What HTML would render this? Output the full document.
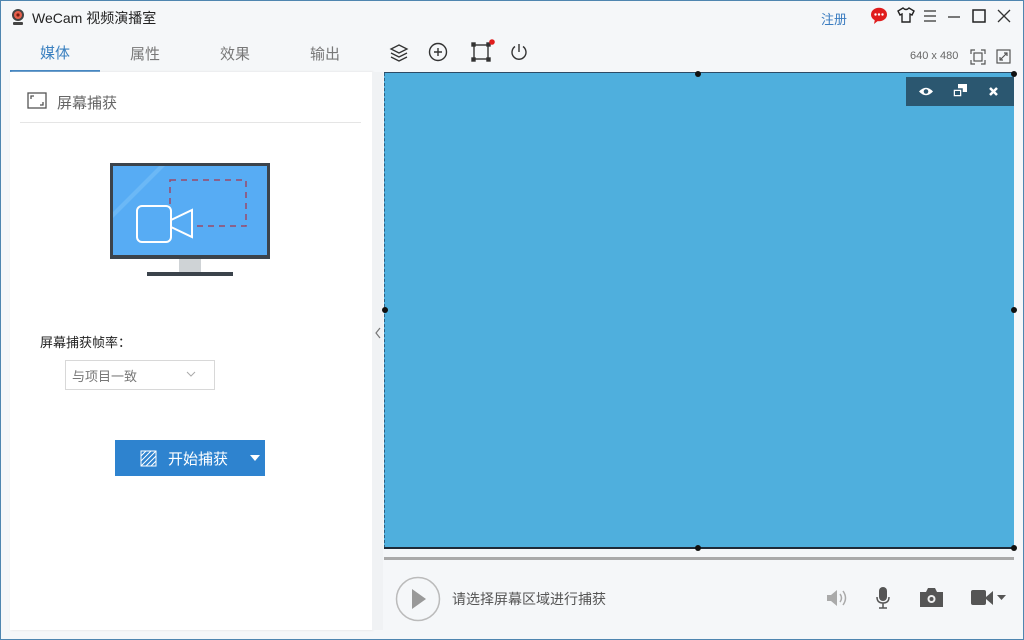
<!DOCTYPE html>
<html><head><meta charset="utf-8"><style>
*{margin:0;padding:0;box-sizing:border-box}
body{width:1024px;height:640px;overflow:hidden;background:#f5f7f9;font-family:"Liberation Sans","Noto Sans CJK SC",sans-serif;position:relative}
.a{position:absolute}
.t{font-size:14px;color:#777}
</style></head><body>
<!-- title -->
<svg class="a" style="left:10px;top:8px" width="16" height="18" viewBox="0 0 16 18"><circle cx="8" cy="7" r="6" fill="#444"/><circle cx="8" cy="7" r="4" fill="#e8604c"/><circle cx="8" cy="7" r="1.6" fill="#7a1d10"/><rect x="3" y="14" width="10" height="3" rx="1" fill="#444"/></svg>
<div class="a" style="left:32px;top:8px;font-size:14px;color:#222">WeCam 视频演播室</div>
<div class="a" style="left:821px;top:9px;font-size:13px;color:#3a7cc0">注册</div>
<svg class="a" style="left:870px;top:7px" width="18" height="18" viewBox="0 0 18 18"><ellipse cx="9" cy="7.5" rx="8" ry="6.8" fill="#e01d1d"/><path d="M5 12l-1 5 5-4z" fill="#e01d1d"/><circle cx="5.5" cy="7.5" r="1.2" fill="#fff"/><circle cx="9" cy="7.5" r="1.2" fill="#fff"/><circle cx="12.5" cy="7.5" r="1.2" fill="#fff"/></svg>
<svg class="a" style="left:897px;top:7px" width="18" height="16" viewBox="0 0 18 16" fill="none" stroke="#222" stroke-width="1.4"><path d="M6 1L1 4l2 4 2-1v8h8V7l2 1 2-4-5-3q-3 3-6 0z"/></svg>
<svg class="a" style="left:923px;top:9px" width="14" height="14" stroke="#333" stroke-width="1.3"><path d="M1 2h12M1 7h12M1 12h12"/></svg>
<svg class="a" style="left:947px;top:9px" width="14" height="14" stroke="#333" stroke-width="1.3"><path d="M1 8h12"/></svg>
<svg class="a" style="left:972px;top:9px" width="14" height="14" fill="none" stroke="#222" stroke-width="1.5"><rect x="1" y="1" width="12" height="12"/></svg>
<svg class="a" style="left:997px;top:9px" width="14" height="14" stroke="#333" stroke-width="1.3"><path d="M1 1l12 12M13 1L1 13"/></svg>
<!-- tabs -->
<div class="a" style="left:40px;top:42px;font-size:15px;color:#3a80c0">媒体</div>
<div class="a" style="left:10px;top:70px;width:90px;height:2px;background:#3a80c0"></div>
<div class="a t" style="left:130px;top:43px;font-size:15px">属性</div>
<div class="a t" style="left:220px;top:43px;font-size:15px">效果</div>
<div class="a t" style="left:310px;top:43px;font-size:15px">输出</div>
<svg class="a" style="left:389px;top:43px" width="20" height="20" fill="none" stroke="#333" stroke-width="1.3"><path d="M10 2l8 4-8 4-8-4z M2 10l8 4 8-4 M2 14l8 4 8-4"/></svg>
<svg class="a" style="left:428px;top:42px" width="20" height="20" fill="none" stroke="#333" stroke-width="1.4"><circle cx="10" cy="10" r="8.5"/><path d="M10 6v8M6 10h8"/></svg>
<svg class="a" style="left:471px;top:39px" width="26" height="24" fill="none" stroke="#333" stroke-width="1.4"><rect x="3" y="6" width="14" height="14"/><rect x="1" y="4" width="3" height="3" fill="#333"/><rect x="16" y="4" width="3" height="3" fill="#333"/><rect x="1" y="19" width="3" height="3" fill="#333"/><rect x="16" y="19" width="3" height="3" fill="#333"/><circle cx="21" cy="3" r="2.8" fill="#e01d1d" stroke="none"/></svg>
<svg class="a" style="left:509px;top:42px" width="20" height="20" fill="none" stroke="#333" stroke-width="1.4"><path d="M10 2v8M6 4.5a7 7 0 1 0 8 0"/></svg>
<div class="a" style="left:910px;top:50px;font-size:11px;color:#666">640 x 480</div>
<svg class="a" style="left:970px;top:49px" width="16" height="16" fill="none" stroke="#555" stroke-width="1.2"><path d="M1 5V1h4M11 1h4v4M15 11v4h-4M5 15H1v-4"/><rect x="4" y="4" width="8" height="8"/></svg>
<svg class="a" style="left:996px;top:49px" width="15" height="15" fill="none" stroke="#555" stroke-width="1.2"><rect x="1" y="1" width="13" height="13"/><path d="M4 11l7-7M8 4h3v3M4 8v3h3"/></svg>
<!-- left panel -->
<div class="a" style="left:10px;top:72px;width:362px;height:558px;background:#fff;box-shadow:1px 0 2px #ddd"></div>
<svg class="a" style="left:27px;top:92px" width="20" height="17" fill="none" stroke="#555" stroke-width="1.3"><rect x="1" y="1" width="18" height="15"/><path d="M4 7V4h3M16 10v3h-3"/></svg>
<div class="a" style="left:57px;top:92px;font-size:15px;color:#666">屏幕捕获</div>
<div class="a" style="left:20px;top:122px;width:341px;height:1px;background:#e5e5e5"></div>
<!-- monitor -->
<svg class="a" style="left:109px;top:162px" width="162" height="120" viewBox="0 0 162 120">
<rect x="1" y="1" width="160" height="96" fill="#3b434b"/>
<rect x="4" y="4" width="154" height="89" fill="#57acf4"/>
<path d="M4 50L50 4h6L4 56z" fill="#6bb8f6"/>
<rect x="61" y="18" width="76" height="46" fill="none" stroke="#9a4a6a" stroke-width="1.5" stroke-dasharray="6 5"/>
<rect x="28" y="44" width="34" height="36" rx="5" fill="#57acf4" stroke="#fff" stroke-width="2"/>
<path d="M62 58l21-10v27l-21-10z" fill="#57acf4" stroke="#fff" stroke-width="2"/>
<rect x="70" y="97" width="22" height="13" fill="#cfd3d6"/>
<rect x="38" y="110" width="86" height="4" fill="#3b434b"/>
</svg>
<div class="a" style="left:40px;top:332px;font-size:13px;color:#222">屏幕捕获帧率：</div>
<div class="a" style="left:65px;top:360px;width:150px;height:30px;border:1px solid #d8d8d8;font-size:13px;color:#777;padding:5px 0 0 6px">与项目一致</div>
<svg class="a" style="left:186px;top:370px" width="10" height="8" fill="none" stroke="#aaa"><path d="M1 2l4 4 4-4"/></svg>
<div class="a" style="left:115px;top:440px;width:150px;height:36px;background:#2e83cf"></div>
<svg class="a" style="left:140px;top:450px" width="17" height="17" fill="none" stroke="#fff" stroke-width="1"><rect x="1" y="1" width="15" height="15"/><path d="M1 6l5-5M1 11l10-10M1 16l15-15M6 16l10-10M11 16l5-5"/></svg>
<div class="a" style="left:168px;top:448px;font-size:15px;color:#fff">开始捕获</div>
<svg class="a" style="left:250px;top:455px" width="10" height="6"><path d="M0 0h10L5 6z" fill="#fff"/></svg>
<!-- splitter -->
<div class="a" style="left:372px;top:72px;width:11px;height:558px;background:#f0f2f4"></div>
<svg class="a" style="left:374px;top:327px" width="8" height="12" fill="none" stroke="#777" stroke-width="1.2"><path d="M6 1L2 6l4 5"/></svg>
<!-- preview -->
<div class="a" style="left:384px;top:73px;width:630px;height:475px;background:#4fafdd;border-left:1px dashed #2d5f80"></div>
<div class="a" style="left:384px;top:547px;width:630px;height:2px;background:#1d2a38"></div>
<div class="a" style="left:384px;top:72px;width:630px;height:1px;background:#2d4b66"></div>
<div class="a" style="left:384px;top:557px;width:630px;height:3px;background:#aaa"></div>
<div class="a" style="left:906px;top:77px;width:108px;height:29px;background:#2b5770"></div>
<svg class="a" style="left:918px;top:86px" width="16" height="11"><path d="M1 5.5Q8 -2 15 5.5Q8 13 1 5.5z" fill="#fff"/><circle cx="8" cy="5.5" r="2.3" fill="#2b5770"/></svg>
<svg class="a" style="left:952px;top:84px" width="16" height="14" fill="#fff"><rect x="6" y="0" width="9" height="8"/><rect x="1" y="5" width="9" height="8" stroke="#2b5770" stroke-width="1.5"/><rect x="3" y="7" width="5" height="4" fill="#2b5770"/></svg>
<svg class="a" style="left:988px;top:86px" width="11" height="11" stroke="#fff" stroke-width="2.5"><path d="M2 2l7 7M9 2L2 9"/></svg>
<!-- handles -->
<div class="a" style="left:695px;top:71px;width:6px;height:6px;border-radius:3px;background:#111"></div>
<div class="a" style="left:695px;top:545px;width:6px;height:6px;border-radius:3px;background:#111"></div>
<div class="a" style="left:382px;top:307px;width:6px;height:6px;border-radius:3px;background:#111"></div>
<div class="a" style="left:1011px;top:307px;width:6px;height:6px;border-radius:3px;background:#111"></div>
<div class="a" style="left:1011px;top:71px;width:6px;height:6px;border-radius:3px;background:#111"></div>
<div class="a" style="left:1011px;top:545px;width:6px;height:6px;border-radius:3px;background:#111"></div>
<!-- bottom controls -->
<svg class="a" style="left:395px;top:576px" width="46" height="46"><circle cx="23" cy="23" r="21.5" fill="none" stroke="#bbb" stroke-width="1.5"/><path d="M17 13l14 10-14 10z" fill="#999"/></svg>
<div class="a" style="left:452px;top:589px;font-size:14px;color:#555">请选择屏幕区域进行捕获</div>
<svg class="a" style="left:826px;top:588px" width="22" height="20" fill="#aaa"><path d="M1 7h4l6-5v16l-6-5H1z"/><path d="M14 6q3 4 0 8M17 3q5 7 0 14" fill="none" stroke="#aaa" stroke-width="1.5"/></svg>
<svg class="a" style="left:875px;top:586px" width="16" height="24"><rect x="4" y="1" width="8" height="14" rx="4" fill="#555"/><path d="M2 11q0 6 6 6t6-6M8 17v5M4 22h8" fill="none" stroke="#555" stroke-width="1.5"/></svg>
<svg class="a" style="left:919px;top:586px" width="25" height="22"><path d="M1 6h6l2-4h7l2 4h6v15H1z" fill="#555"/><circle cx="12.5" cy="13" r="4" fill="#eee"/><circle cx="12.5" cy="13" r="2" fill="#555"/></svg>
<svg class="a" style="left:970px;top:588px" width="40" height="20"><rect x="1" y="2" width="15" height="15" rx="2" fill="#555"/><path d="M16 9l7-6v14l-7-6z" fill="#555"/><path d="M27 7h9l-4.5 5z" fill="#555"/></svg>
<div class="a" style="left:0;top:0;width:1024px;height:640px;border:1px solid #4f86b0;pointer-events:none"></div>
</body></html>
